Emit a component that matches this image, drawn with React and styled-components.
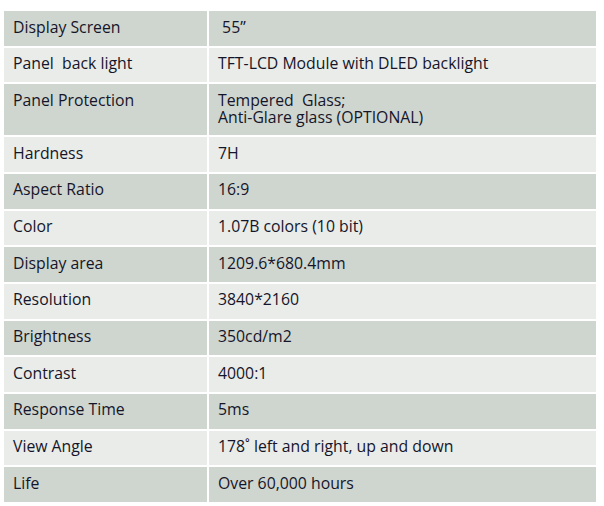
import React from 'react';
import styled, { createGlobalStyle } from 'styled-components';

const GlobalStyle = createGlobalStyle`
  body {
    margin: 0;
    background: #ffffff;
  }
`;

const Page = styled.div`
  width: 604px;
  height: 506px;
  padding: 11px 0 0 4px;
  box-sizing: border-box;
  background: #ffffff;
`;

const SpecGrid = styled.div`
  display: grid;
  grid-template-columns: 203px 387px;
  column-gap: 2px;
  row-gap: 2px;
  font-family: 'Open Sans', 'Liberation Sans', sans-serif;
  font-size: 15.8px;
  line-height: 17.6px;
  color: #15152a;
`;

const Cell = styled.div`
  min-height: ${(p) => (p.tall ? '51px' : '34.67px')};
  box-sizing: border-box;
  padding: 7.5px 9px 0;
  white-space: pre-wrap;
  background: ${(p) => (p.shade ? '#cfd5cf' : '#e9ece9')};
`;

const specs = [
  ['Display Screen', ' 55”'],
  ['Panel  back light', 'TFT-LCD Module with DLED backlight'],
  ['Panel Protection', 'Tempered  Glass;\nAnti-Glare glass (OPTIONAL)'],
  ['Hardness', '7H'],
  ['Aspect Ratio', '16:9'],
  ['Color', '1.07B colors (10 bit)'],
  ['Display area', '1209.6*680.4mm'],
  ['Resolution', '3840*2160'],
  ['Brightness', '350cd/m2'],
  ['Contrast', '4000:1'],
  ['Response Time', '5ms'],
  ['View Angle', '178˚ left and right, up and down'],
  ['Life', 'Over 60,000 hours'],
];

const App = () => (
  <Page>
    <GlobalStyle />
    <SpecGrid>
      {specs.map(([label, value], i) => {
        const shade = i % 2 === 0;
        const tall = value.includes('\n');
        return (
          <React.Fragment key={label}>
            <Cell shade={shade} tall={tall}>{label}</Cell>
            <Cell shade={shade} tall={tall}>{value}</Cell>
          </React.Fragment>
        );
      })}
    </SpecGrid>
  </Page>
);

export default App;
